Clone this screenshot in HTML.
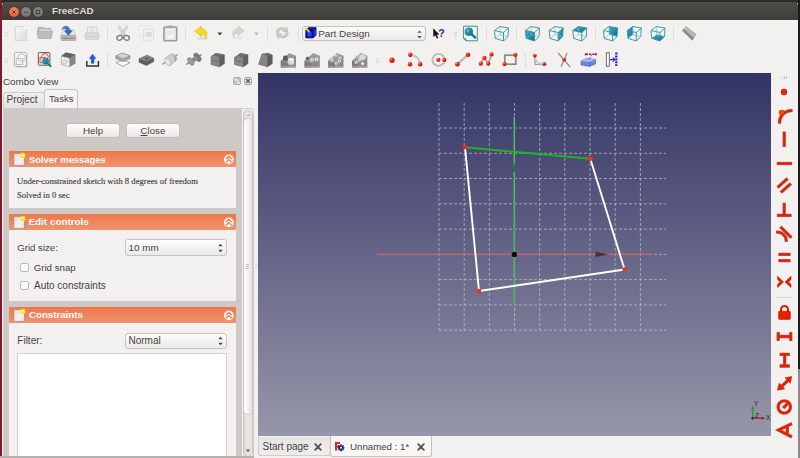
<!DOCTYPE html>
<html>
<head>
<meta charset="utf-8">
<title>FreeCAD</title>
<style>
html,body{margin:0;padding:0;}
body{width:800px;height:458px;overflow:hidden;position:relative;background:#f2f1f0;font-family:"Liberation Sans",sans-serif;color:#45433f;}
.abs{position:absolute;}
.t{position:absolute;white-space:nowrap;line-height:1;transform-origin:0 0;}
#desk-l{left:0;top:0;width:2px;height:458px;background:#7d1a30;}
#desk-t{left:0;top:0;width:800px;height:3px;background:#2c2b29;}
#desk-r{left:798px;top:0;width:2px;height:458px;background:#1a1a1a;}
#desk-r2{left:798px;top:369px;width:2px;height:89px;background:#8b8b8b;}
#titlebar{left:2px;top:2px;width:796px;height:18px;border-radius:4px 4px 0 0;background:linear-gradient(#504f49,#3c3b37);}
.wbtn{position:absolute;top:7px;width:9px;height:9px;border-radius:50%;}
#title{left:51.7px;top:7.2px;font-size:9px;font-weight:bold;color:#dfdbd2;transform:scaleX(1.08);}
.handle{position:absolute;width:3px;height:1px;background:#d9d6d2;box-shadow:0 2px 0 #d9d6d2,0 4px 0 #d9d6d2;}
.vsep{position:absolute;width:1px;height:15px;background:#e2dfdb;}
.combo{position:absolute;box-sizing:border-box;border:1px solid #c6c3be;border-radius:3px;background:linear-gradient(#fdfdfd,#ebe9e7);}
.btn{position:absolute;box-sizing:border-box;border:1px solid #c4c0ba;border-radius:3px;background:linear-gradient(#fefefe,#e9e7e5);}
.hdr{position:absolute;left:9px;width:227px;height:16px;background:linear-gradient(#ef7748,#f19370);}
.box{position:absolute;left:9px;width:227px;background:#f2f1f0;}
.chk{position:absolute;box-sizing:border-box;width:9.5px;height:9.5px;border:1px solid #bcb8b2;border-radius:2px;background:#fdfdfd;}
</style>
</head>
<body>
<!-- desktop edges -->
<div id="desk-t" class="abs"></div>
<div id="desk-l" class="abs"></div>
<div id="desk-r" class="abs"></div>
<div id="desk-r2" class="abs"></div>

<!-- title bar -->
<div id="titlebar" class="abs"></div>
<div class="wbtn" style="left:9px;width:10px;height:10px;top:6.5px;background:radial-gradient(circle at 50% 35%,#f58a5e,#e2541f);box-shadow:0 0 0 0.5px #5a2a18;"></div>
<div class="wbtn" style="left:21px;width:10px;height:10px;top:6.5px;background:radial-gradient(circle at 50% 35%,#8d8b84,#6b6963);box-shadow:0 0 0 0.5px #33322f;"></div>
<div class="wbtn" style="left:33px;width:10px;height:10px;top:6.5px;background:radial-gradient(circle at 50% 35%,#8d8b84,#6b6963);box-shadow:0 0 0 0.5px #33322f;"></div>
<svg class="abs" style="left:9px;top:6.5px;" width="34" height="10" viewBox="0 0 34 10">
  <path d="M3.3 3.3L6.7 6.7M6.7 3.3L3.3 6.7" stroke="#5a2010" stroke-width="1" opacity="0.85"/>
  <path d="M15 5.2H19" stroke="#3a3935" stroke-width="1"/>
  <rect x="27.3" y="3.3" width="3.4" height="3.4" fill="none" stroke="#3a3935" stroke-width="0.9"/>
</svg>
<span id="title" class="t">FreeCAD</span>

<!-- toolbars -->
<div class="handle" style="left:5px;top:31.5px;"></div>
<div class="handle" style="left:5px;top:58px;"></div>
<div class="handle" style="left:454px;top:31.5px;"></div>
<div class="handle" style="left:375.5px;top:58px;"></div>
<div class="vsep" style="left:107px;top:26px;"></div>
<div class="vsep" style="left:185px;top:26px;"></div>
<div class="vsep" style="left:266.5px;top:26px;"></div>
<div class="vsep" style="left:297.5px;top:26px;"></div>
<div class="vsep" style="left:485.5px;top:26px;"></div>
<div class="vsep" style="left:516px;top:26px;"></div>
<div class="vsep" style="left:595px;top:26px;"></div>
<div class="vsep" style="left:673px;top:26px;"></div>
<div class="vsep" style="left:107px;top:52.5px;"></div>
<div class="vsep" style="left:525px;top:52.5px;"></div>
<!-- workbench combo -->
<div class="combo" style="left:302px;top:25.5px;width:124px;height:15.5px;"></div>
<span class="t" style="left:318.2px;top:28.9px;font-size:9.9px;">Part Design</span>
<svg class="abs" style="left:417px;top:29px;" width="5" height="10" viewBox="0 0 5 10"><path d="M0.3 3.8 L2.5 1.4 L4.7 3.8Z M0.3 7 L2.5 9.4 L4.7 7Z" fill="#5a5852"/></svg>
<svg class="abs" style="left:0;top:20px;" width="800" height="53" viewBox="0 20 800 53">
<defs>
  <linearGradient id="gpage" x1="0" y1="0" x2="1" y2="1"><stop offset="0" stop-color="#f6f6f6"/><stop offset="1" stop-color="#dcdcdc"/></linearGradient>
  <linearGradient id="gteal" x1="0" y1="0" x2="1" y2="1"><stop offset="0" stop-color="#3fb0c6"/><stop offset="1" stop-color="#0b6f88"/></linearGradient>
  <radialGradient id="gball" cx="0.35" cy="0.3" r="0.8"><stop offset="0" stop-color="#ff9a80"/><stop offset="0.35" stop-color="#ff2a10"/><stop offset="1" stop-color="#a80000"/></radialGradient>
  <linearGradient id="gdark" x1="0" y1="0" x2="1" y2="1"><stop offset="0" stop-color="#8e8e8e"/><stop offset="1" stop-color="#5c5c5c"/></linearGradient>
</defs>
<!-- row 1 -->
<!-- new -->
<g>
  <path d="M15.3 26.5H24.3L26.7 28.9V40.5H15.3Z" fill="url(#gpage)" stroke="#cfcfcf" stroke-width="0.8"/>
  <circle cx="25.3" cy="27.8" r="1.6" fill="#fbfbfb"/>
</g>
<!-- open -->
<g>
  <path d="M38 27.3H43L44 28.3H51V37.8H38Z" fill="#b9b9b9" stroke="#a5a5a5" stroke-width="0.6"/>
  <path d="M39.5 29.5H50.5V37H39.5Z" fill="#e1e1e1"/>
  <path d="M37 31.2H52.8L51 38.4H38.2Z" fill="#bdbdbd" stroke="#a2a2a2" stroke-width="0.6"/>
</g>
<!-- save -->
<g>
  <path d="M63 30H73.8L75.9 35.6H61Z" fill="#e9e9e9" stroke="#b9b9b9" stroke-width="0.6"/>
  <rect x="61" y="35.3" width="14.9" height="5.2" rx="1" fill="#b9b9b9" stroke="#9a9a9a" stroke-width="0.6"/>
  <rect x="62.8" y="37.6" width="11.4" height="1.4" fill="#8f8f8f"/>
  <path d="M61.8 29.6C62.2 27 64.5 25.8 66.8 26.2C69 26.6 70.2 28.4 70.4 30.7H72.4L68.4 35.3L64.3 30.7H66.6C66.4 29.4 65.6 28.6 64.5 28.5C63.4 28.4 62.5 28.9 61.8 29.6Z" fill="#2f6fc0" stroke="#1f4f98" stroke-width="0.4" stroke-linejoin="round"/>
  <path d="M62.4 28.6C63.2 27.2 65 26.5 66.8 26.8C68.4 27.2 69.4 28.4 69.8 30" fill="none" stroke="#7fb0e6" stroke-width="0.8"/>
</g>
<!-- print -->
<g>
  <rect x="87.3" y="27" width="9.5" height="6.5" fill="#ececec" stroke="#cbcbcb" stroke-width="0.7"/>
  <path d="M92 28.3V31.6M90.6 30.2L92 31.7L93.4 30.2" stroke="#cfcfcf" stroke-width="0.8" fill="none"/>
  <rect x="85" y="32.7" width="14" height="6.6" rx="1.2" fill="#dedede" stroke="#c3c3c3" stroke-width="0.7"/>
  <rect x="85.6" y="36" width="12.8" height="1" fill="#c9c9c9"/>
</g>
<!-- cut -->
<g fill="none">
  <path d="M118.7 26.2L125 36" stroke="#b4b4b4" stroke-width="2.4"/>
  <path d="M118.7 26.2L125 36" stroke="#ececec" stroke-width="1.2"/>
  <path d="M127.3 26.2L121 36" stroke="#b4b4b4" stroke-width="2.4"/>
  <path d="M127.3 26.2L121 36" stroke="#ececec" stroke-width="1.2"/>
  <ellipse cx="119.6" cy="37.8" rx="2.8" ry="2.3" transform="rotate(-25 119.6 37.8)" stroke="#858585" stroke-width="1.5"/>
  <ellipse cx="126.6" cy="37.8" rx="2.8" ry="2.3" transform="rotate(25 126.6 37.8)" stroke="#858585" stroke-width="1.5"/>
</g>
<!-- copy -->
<g>
  <path d="M139.2 26H149V36.5H139.2Z" fill="#f4f4f4" stroke="#dedede" stroke-width="0.7"/>
  <path d="M143.3 29.3H153.5V38.3L151 40.8H143.3Z" fill="#f1f1f1" stroke="#d4d4d4" stroke-width="0.7"/>
  <rect x="145.5" y="32" width="6" height="4.8" fill="#dadada"/>
</g>
<!-- paste -->
<g>
  <rect x="163.9" y="26.9" width="12.8" height="13.8" rx="0.8" fill="#e4e4e4" stroke="#9a9a9a" stroke-width="1.5"/>
  <rect x="167.3" y="25.4" width="6" height="2.4" rx="0.6" fill="#a8a8a8"/>
  <path d="M165.8 29H174.8V36.8L172.6 39H165.8Z" fill="#f4f4f4" stroke="#d0d0d0" stroke-width="0.4"/>
  <path d="M167 31.2H173.5M167 33H173.5M167 34.8H172" stroke="#d4d4d4" stroke-width="0.7"/>
</g>
<!-- undo -->
<g>
  <ellipse cx="202.5" cy="38.5" rx="5.5" ry="1.3" fill="#dcdad6"/>
  <path d="M194.8 31.2L201.5 26.2V29C207 29 208.6 34.2 205 38.8C205.6 35.4 204.5 33.9 201.5 34V36.6Z" fill="#f5dc1e" stroke="#d9b800" stroke-width="0.6" stroke-linejoin="round"/>
</g>
<path d="M217.3 32.5H222.3L219.8 35.6Z" fill="#45443f"/>
<!-- redo -->
<g>
  <ellipse cx="237.5" cy="38" rx="5.3" ry="1.2" fill="#e6e4e1"/>
  <path d="M244.2 30.8L238.1 26.2V28.9C233 28.9 231.4 33.4 234.2 37.7C233.6 34.4 235 33.1 238.1 33.2V35.8Z" fill="#d4d4d4" stroke="#c4c4c4" stroke-width="0.6" stroke-linejoin="round"/>
</g>
<path d="M254 32.5H258.8L256.4 35.5Z" fill="#b9b7b3"/>
<!-- refresh -->
<g fill="#c9c9c9" stroke="#b5b5b5" stroke-width="0.5" stroke-linejoin="round">
  <path d="M276.2 32.5C276.2 28 281.5 26 285 28.6L286.6 26.8L287.8 32.2L282.4 31.6L283.8 30C281.8 28.8 279 29.8 278.8 32.5Z"/>
  <path d="M288.3 33C288.3 37.5 283 39.5 279.5 36.9L277.9 38.7L276.7 33.3L282.1 33.9L280.7 35.5C282.7 36.7 285.5 35.7 285.7 33Z"/>
</g>
<!-- workbench icon -->
<g stroke-linejoin="round">
  <path d="M305.9 30.2L308.6 27.7H316V35.3L313 37.8H305.9Z" fill="#0a16d8" stroke="#04041c" stroke-width="0.9"/>
  <path d="M313 30.2L316 27.7V35.3L313 37.8Z" fill="#1434f2"/>
  <path d="M305.9 30.2H313V37.8M313 30.2L316 27.7" stroke="#04041c" stroke-width="0.8" fill="none"/>
  <rect x="307.6" y="32" width="3.8" height="4" fill="#2a4af4"/>
  <path d="M305.9 28.1L309.3 32.2" stroke="#f2cc18" stroke-width="2"/>
</g>
<!-- whats this -->
<g>
  <path d="M433.3 28.2V37L435.3 35.2L436.8 38.6L438.3 37.9L436.8 34.7L439.3 34.5Z" fill="#111" />
  <text x="438.3" y="36.9" font-family="Liberation Sans, sans-serif" font-weight="bold" font-size="10.5" fill="#1f1fa8">?</text>
</g>
<!-- zoom fit -->
<g>
  <path d="M463.6 26.2H477.3V40.8H466L463.6 38.6Z" fill="#f5f8f8" stroke="#3a8a9c" stroke-width="1"/>
  <path d="M463.6 38.6H466V40.8" fill="none" stroke="#3a8a9c" stroke-width="0.8"/>
  <path d="M472 34.6L475.2 37.7" stroke="#0f7890" stroke-width="2.3" stroke-linecap="round"/>
  <circle cx="468.9" cy="31.7" r="3.9" fill="url(#gteal)" stroke="#0b6a80" stroke-width="0.6"/>
  <circle cx="467.8" cy="30.5" r="1.3" fill="#7fd0df" opacity="0.7"/>
</g>

<!-- view cubes -->
<defs>
  <g id="cubew" fill="none" stroke="#2f8ea3" stroke-width="0.9" stroke-linejoin="round">
    <path d="M6 1L6.2 9M6.2 9L1.2 12.8M6.2 9L14 11" stroke="#7fbfcc" stroke-width="0.7"/>
    <path d="M0.5 5L9.5 7V15.5L1.2 12.8Z"/>
    <path d="M0.5 5L6 1L14.5 2.5L9.5 7"/>
    <path d="M14.5 2.5L14 11L9.5 15.5"/>
  </g>
</defs>
<g transform="translate(494 25.5)"><path d="M0.5 5L6 1L14.5 2.5L14 11L9.5 15.5L1.2 12.8Z" fill="#f1f4f4"/><use href="#cubew"/></g>
<g transform="translate(525 25.5)"><path d="M0.5 5L6 1L14.5 2.5L14 11L9.5 15.5L1.2 12.8Z" fill="#f1f4f4"/><path d="M0.5 5L9.5 7V15.5L1.2 12.8Z" fill="url(#gteal)"/><use href="#cubew"/></g>
<g transform="translate(548.7 25.5)"><path d="M0.5 5L6 1L14.5 2.5L14 11L9.5 15.5L1.2 12.8Z" fill="#f1f4f4"/><path d="M9.5 7L14.5 2.5L14 11L9.5 15.5Z" fill="url(#gteal)"/><use href="#cubew"/></g>
<g transform="translate(572.3 25.5)"><path d="M0.5 5L6 1L14.5 2.5L14 11L9.5 15.5L1.2 12.8Z" fill="#f1f4f4"/><path d="M0.5 5L6 1L14.5 2.5L9.5 7Z" fill="url(#gteal)"/><use href="#cubew"/></g>
<g transform="translate(603 25.5)"><path d="M0.5 5L6 1L14.5 2.5L14 11L9.5 15.5L1.2 12.8Z" fill="#f1f4f4"/><path d="M6 1L14.5 2.5L14 11L6.2 9Z" fill="url(#gteal)"/><use href="#cubew"/></g>
<g transform="translate(626.8 25.5)"><path d="M0.5 5L6 1L14.5 2.5L14 11L9.5 15.5L1.2 12.8Z" fill="#f1f4f4"/><path d="M0.5 5L6 1L6.2 9L1.2 12.8Z" fill="url(#gteal)"/><use href="#cubew"/></g>
<g transform="translate(650.5 25.5)"><path d="M0.5 5L6 1L14.5 2.5L14 11L9.5 15.5L1.2 12.8Z" fill="#f1f4f4"/><path d="M1.2 12.8L6.2 9L14 11L9.5 15.5Z" fill="url(#gteal)"/><use href="#cubew"/></g>
<!-- measure -->
<g>
  <path d="M682.3 30.5L686.2 26.6L696 34.2L692.3 40.2Z" fill="#a9a9a9" stroke="#8c8c8c" stroke-width="0.5"/>
  <path d="M682.3 30.5L692.3 40.2L693.6 37.6L684 28.8Z" fill="#8a8a8a"/>
  <path d="M686.2 26.6L696 34.2L693.6 37.6L684 28.8Z" fill="#b8b8b8"/>
</g>

<!-- row 2 -->
<!-- new sketch -->
<g>
  <rect x="15.5" y="53.5" width="12" height="14" rx="1.2" fill="#c6c6c6"/>
  <rect x="14.4" y="52.4" width="12" height="14" rx="1.2" fill="#f4f4f4" stroke="#a2a2a2" stroke-width="0.8"/>
  <circle cx="21.6" cy="57.6" r="3.7" fill="none" stroke="#b2b2b2" stroke-width="0.8"/>
  <rect x="16.2" y="58.6" width="6.6" height="5.8" fill="none" stroke="#b2b2b2" stroke-width="0.8"/>
</g>
<!-- edit sketch -->
<g>
  <rect x="38.3" y="52.6" width="11.6" height="12.6" rx="0.8" fill="#f6f6f6" stroke="#4a4a4a" stroke-width="0.9"/>
  <circle cx="45" cy="56.8" r="3.3" fill="#fbe3df" stroke="#e34a3a" stroke-width="1"/>
  <rect x="40" y="57.6" width="5.2" height="5.2" fill="#f9d4cf" stroke="#e34a3a" stroke-width="1"/>
  <path d="M47.6 63.4L50.8 66.4" stroke="#0f7890" stroke-width="1.7" stroke-linecap="round"/>
  <circle cx="45.6" cy="61.2" r="3.1" fill="url(#gteal)" stroke="#0b6a80" stroke-width="0.5"/>
</g>
<!-- part box -->
<g>
  <path d="M61.4 56L66 52.5L75.5 54.5V63.5L70 66.8L61.4 64.5Z" fill="#858585"/>
  <path d="M61.4 56L69.6 58V66.8L61.4 64.5Z" fill="#f0f0f0" stroke="#9a9a9a" stroke-width="0.5"/>
  <path d="M61.4 56L66 52.5L75.5 54.5L69.6 58Z" fill="#646464"/>
  <circle cx="66.3" cy="59.6" r="2.2" fill="none" stroke="#b8b8b8" stroke-width="0.6"/>
  <rect x="63" y="60.8" width="3.4" height="3" fill="none" stroke="#b8b8b8" stroke-width="0.6"/>
</g>
<!-- export -->
<g>
  <path d="M86.8 61V66H98.4V61" fill="none" stroke="#303030" stroke-width="1.5"/>
  <path d="M92.6 54.2L95.8 58.6H93.9V63.2H91.3V58.6H89.4Z" fill="#1d62d6" stroke="#0d3f9c" stroke-width="0.5"/>
</g>
<!-- pad -->
<g>
  <path d="M115.8 62.6L123 60L130 62.6L123 66.4Z" fill="#fafafa" stroke="#6e6e6e" stroke-width="0.6"/>
  <path d="M115.8 55.8L123 53L130 55.8V58.6L123 61.6L115.8 58.6Z" fill="#a6a6a6" stroke="#707070" stroke-width="0.5"/>
  <path d="M115.8 55.8L123 53L130 55.8L123 58.6Z" fill="#d2d2d2" stroke="#808080" stroke-width="0.4"/>
</g>
<!-- pocket -->
<g>
  <path d="M139 58.8L147 55.2L153.8 58.3V61.6L146.3 65.6L139 62.3Z" fill="#5c5c5c" stroke="#4c4c4c" stroke-width="0.4"/>
  <path d="M139 58.8L147 55.2L153.8 58.3L146.3 61.8Z" fill="#848484"/>
  <path d="M144.2 58.6L147 57.3L149.4 58.5L146.6 59.8Z" fill="#5a5a5a"/>
</g>
<!-- revolve -->
<g>
  <path d="M162 64.4L165.5 62.2M175 56.3L178 54.4" stroke="#8a8a8a" stroke-width="1.1"/>
  <path d="M165.4 58L171.2 53.9C174.6 53.6 177 56.3 176.7 59.8L170.4 65.6C167.5 66 164.8 62 165.4 58Z" fill="#cdcdcd" stroke="#9a9a9a" stroke-width="0.5"/>
  <path d="M173.2 54.2C175.6 54.8 177 57 176.7 59.8L174 62.3C174.6 59 174.4 56.2 173.2 54.2Z" fill="#a9a9a9"/>
  <ellipse cx="167.8" cy="61.8" rx="2.5" ry="4" transform="rotate(-32 167.8 61.8)" fill="#e6e6e6" stroke="#9a9a9a" stroke-width="0.5"/>
</g>
<!-- groove -->
<g>
  <path d="M186.3 64.5L201.5 54.5" stroke="#777" stroke-width="1.1"/>
  <ellipse cx="190.8" cy="61.5" rx="2.3" ry="4.3" transform="rotate(-35 190.8 61.5)" fill="#9c9c9c" stroke="#666" stroke-width="0.5"/>
  <ellipse cx="197.5" cy="57.3" rx="2.6" ry="4.8" transform="rotate(-35 197.5 57.3)" fill="#7b7b7b" stroke="#5a5a5a" stroke-width="0.5"/>
  <path d="M191.5 58.5L196 55.5L198 59.5L193.5 62.5Z" fill="#8a8a8a"/>
</g>
<!-- fillet -->
<g>
  <path d="M211 56.5L216 53.2L224.3 54.8V63.5L219.5 66.8L211 64.5Z" fill="#6b6b6b" stroke="#505050" stroke-width="0.5"/>
  <path d="M211 56.5C213 55 217 54.5 219.5 58.5V66.8L211 64.5Z" fill="#878787"/>
  <path d="M211.5 60.3L219.3 61.8" stroke="#5a5a5a" stroke-width="0.6"/>
  <path d="M219.5 58.5L224.3 54.8V63.5L219.5 66.8Z" fill="#5f5f5f"/>
</g>
<!-- chamfer -->
<g>
  <path d="M234.6 57.5L240.5 53.2L248 54.8V63.5L243.3 66.8L234.6 64.5Z" fill="#6b6b6b" stroke="#505050" stroke-width="0.5"/>
  <path d="M234.6 59.5L237.5 56L243.3 58V66.8L234.6 64.5Z" fill="#878787"/>
  <path d="M235 60.5L243 62" stroke="#5a5a5a" stroke-width="0.6"/>
  <path d="M243.3 58L248 54.8V63.5L243.3 66.8Z" fill="#5f5f5f"/>
</g>
<!-- draft -->
<g>
  <path d="M262 54L268 53.2L272.2 55V63.5L267.5 66.8L258.7 64.3Z" fill="#676767" stroke="#505050" stroke-width="0.5"/>
  <path d="M262 54L267.5 55.5V66.8L258.7 64.3Z" fill="#858585"/>
  <path d="M267.5 55.5L272.2 55V63.5L267.5 66.8Z" fill="#5c5c5c"/>
</g>

<!-- pattern icons -->
<defs>
  <g id="house">
    <path d="M0.3 14.6V8L9 0.5L15.5 3.3V14.6Z" fill="#8b8b8b"/>
    <path d="M0.3 8L9 0.5L15.5 3.3L7 10.5Z" fill="#9a9a9a"/>
    <path d="M0.3 8L7 10.5V14.6H0.3Z" fill="#7c7c7c"/>
    <path d="M0.3 13.2H15.5V14.6H0.3Z" fill="#9e9e9e"/>
  </g>
</defs>
<g transform="translate(280.5 52.8)">
  <use href="#house"/>
  <rect x="2.6" y="2.6" width="4.6" height="5.6" rx="1.6" fill="#5b5b5b"/>
  <rect x="7.6" y="5.4" width="6" height="6.6" rx="2" fill="#dcdcdc"/>
  <ellipse cx="10.6" cy="6.6" rx="3" ry="1.3" fill="#f2f2f2"/>
</g>
<g transform="translate(304.3 52.8)">
  <use href="#house"/>
  <circle cx="3.2" cy="5.6" r="1.7" fill="#5e5e5e"/>
  <circle cx="7.7" cy="7" r="1.9" fill="#e6e6e6"/>
  <circle cx="12.4" cy="6.6" r="1.9" fill="#e6e6e6"/>
  <circle cx="7.9" cy="7.3" r="0.8" fill="#8f8f8f"/>
  <circle cx="12.6" cy="6.9" r="0.8" fill="#8f8f8f"/>
</g>
<g transform="translate(328 52.8)">
  <use href="#house"/>
  <g fill="#e2e2e2">
    <circle cx="8.3" cy="2.8" r="1.6"/><circle cx="12" cy="5.2" r="1.6"/><circle cx="4" cy="4.8" r="1.6"/>
    <circle cx="11.4" cy="8.4" r="1.6"/><circle cx="8.3" cy="10.8" r="1.6"/><circle cx="4" cy="7.8" r="1.6"/>
  </g>
  <g fill="#8c8c8c">
    <circle cx="8.5" cy="3.1" r="0.7"/><circle cx="12.2" cy="5.5" r="0.7"/><circle cx="4.2" cy="5.1" r="0.7"/>
    <circle cx="11.6" cy="8.7" r="0.7"/><circle cx="8.5" cy="11.1" r="0.7"/><circle cx="4.2" cy="8.1" r="0.7"/>
  </g>
</g>
<g transform="translate(351.8 52.8)">
  <use href="#house"/>
  <path d="M7 2.6L10.3 0.8L14.2 2.6V6L10.8 7.8L7 6Z" fill="#d9d9d9" stroke="#a5a5a5" stroke-width="0.4"/>
  <g fill="#e4e4e4">
    <circle cx="4.4" cy="3.8" r="1.5"/><circle cx="7.6" cy="7.2" r="1.5"/><circle cx="10.8" cy="10.8" r="1.7"/><circle cx="4.4" cy="9.6" r="1.5"/>
  </g>
  <g fill="#8c8c8c"><circle cx="4.6" cy="4.1" r="0.6"/><circle cx="7.8" cy="7.5" r="0.6"/><circle cx="4.6" cy="9.9" r="0.6"/></g>
</g>
<!-- sketcher geometry -->
<circle cx="392" cy="60.2" r="2.6" fill="url(#gball)"/>
<g>
  <path d="M410.8 54.8A10 10 0 0 1 420.2 63.8" fill="none" stroke="#b4b4b4" stroke-width="1.8"/>
  <path d="M410.8 54.8A10 10 0 0 1 420.2 63.8" fill="none" stroke="#e4e4e4" stroke-width="0.6"/>
  <circle cx="410.3" cy="54.8" r="2.2" fill="url(#gball)"/>
  <circle cx="410" cy="64.2" r="2.2" fill="url(#gball)"/>
  <circle cx="420.2" cy="64.3" r="2.2" fill="url(#gball)"/>
</g>
<g>
  <circle cx="438.5" cy="59.9" r="6" fill="none" stroke="#a9a9a9" stroke-width="1.9"/>
  <circle cx="438.5" cy="59.9" r="6" fill="none" stroke="#e2e2e2" stroke-width="0.6"/>
  <circle cx="438.3" cy="59.8" r="2.1" fill="url(#gball)"/>
  <circle cx="444.4" cy="59.9" r="2.1" fill="url(#gball)"/>
</g>
<g>
  <path d="M457.4 64.3L468 54.7" stroke="#a5a5a5" stroke-width="2.2"/>
  <path d="M457.4 64.3L468 54.7" stroke="#dedede" stroke-width="0.7"/>
  <circle cx="457.4" cy="64.2" r="2.3" fill="url(#gball)"/>
  <circle cx="468" cy="54.7" r="2.3" fill="url(#gball)"/>
</g>
<g>
  <path d="M480.8 63.7L484.4 57.8L488.3 63.7L491.5 54.4" fill="none" stroke="#a5a5a5" stroke-width="1.8"/>
  <circle cx="480.8" cy="63.7" r="2.1" fill="url(#gball)"/>
  <circle cx="484.4" cy="57.8" r="2.1" fill="url(#gball)"/>
  <circle cx="488.3" cy="63.7" r="2.1" fill="url(#gball)"/>
  <circle cx="491.5" cy="54.4" r="2.1" fill="url(#gball)"/>
</g>
<g>
  <rect x="504.8" y="55.2" width="11" height="9" fill="none" stroke="#8a8a8a" stroke-width="1.7"/>
  <circle cx="515.3" cy="54.8" r="2.1" fill="url(#gball)"/>
  <circle cx="504.5" cy="64.1" r="2.1" fill="url(#gball)"/>
</g>
<!-- fillet -->
<g>
  <path d="M535 55.5V64.5H547" fill="none" stroke="#9c9c9c" stroke-width="1.2"/>
  <path d="M535.3 57.5C535.8 61.5 538 63.8 542 64.2" fill="none" stroke="#c4c4c4" stroke-width="1.6"/>
  <circle cx="534.8" cy="55.6" r="1.9" fill="url(#gball)"/>
  <circle cx="544.2" cy="64" r="1.9" fill="url(#gball)"/>
</g>
<!-- trim -->
<g>
  <path d="M558.2 53L570 66.8M567.2 53L561 66.8" stroke="#8f8f8f" stroke-width="1.3"/>
  <circle cx="564.1" cy="59.6" r="1.9" fill="url(#gball)"/>
</g>
<!-- external geometry -->
<g>
  <path d="M581 61L586.5 58.3L595.5 59.5V64L589.5 66.4L581 65Z" fill="#6f86de" stroke="#3a4fb0" stroke-width="0.5"/>
  <path d="M581 61L586.5 58.3L595.5 59.5L589.5 62Z" fill="#aab8f2"/>
  <path d="M589.5 62V66.4" stroke="#3a4fb0" stroke-width="0.5"/>
  <path d="M589 59.5L591.5 55" stroke="#23238a" stroke-width="0.8" stroke-dasharray="1.2 0.8"/>
  <path d="M586 54.2H596" stroke="#2222c8" stroke-width="1.4" stroke-dasharray="2 1.2"/>
  <circle cx="586" cy="54.2" r="1.2" fill="#e02010"/>
  <circle cx="595.8" cy="54.2" r="1.2" fill="#e02010"/>
</g>
<!-- construction mode -->
<g>
  <rect x="606.3" y="52.8" width="3" height="13.4" fill="#fafafa" stroke="#4a4a4a" stroke-width="0.8"/>
  <path d="M616.3 52.6V66.6" stroke="#1616d8" stroke-width="2.2" stroke-dasharray="1.9 1"/>
  <path d="M610 59.6H615M612.8 57.6L615 59.6L612.8 61.6" stroke="#2a2ad0" stroke-width="1.1" fill="none"/>
</g>

</svg>


<!-- Combo view dock -->
<span class="t" style="left:3px;top:77px;font-size:9.8px;">Combo View</span>
<svg class="abs" style="left:233px;top:77px;" width="20" height="8" viewBox="0 0 20 8">
  <rect x="0.5" y="0.5" width="7" height="7" rx="1.5" fill="#e4e2df" stroke="#aeaba6" stroke-width="1"/>
  <path d="M2 6L4 4M3 1.8H6.2V5" stroke="#b5b2ad" stroke-width="1.1" fill="none"/>
  <path d="M1.8 3.4V6.2H4.6" stroke="#bcb9b4" stroke-width="0.9" fill="none"/>
  <rect x="11.5" y="0.5" width="7" height="7" rx="1.5" fill="#e4e2df" stroke="#aeaba6" stroke-width="1"/>
  <path d="M13 2L17 6M17 2L13 6" stroke="#5a5853" stroke-width="1.1" fill="none"/>
</svg>
<!-- tab widget frame -->
<div class="abs" style="left:3px;top:107.5px;width:251px;height:353px;box-sizing:border-box;border:1px solid #d0cdc8;border-radius:0 3px 0 0;background:#f2f1f0;"></div>
<!-- tabs -->
<div class="abs" style="left:3px;top:92px;width:42px;height:17px;box-sizing:border-box;border:1px solid #cfccc7;border-bottom:none;border-radius:3px 3px 0 0;background:linear-gradient(#f0efed,#e4e2df);"></div>
<div class="abs" style="left:44px;top:89px;width:34px;height:20px;box-sizing:border-box;border:1px solid #c9c5c0;border-bottom:none;border-radius:3px 3px 0 0;background:#f5f4f3;"></div>
<span class="t" style="left:6.5px;top:95px;font-size:10px;">Project</span>
<span class="t" style="left:49px;top:94px;font-size:9.6px;">Tasks</span>
<!-- task panel gray background -->
<div class="abs" style="left:4px;top:108.4px;width:238px;height:350px;background:#cdc9c6;"></div>
<!-- scrollbar -->
<div class="abs" style="left:243px;top:110px;width:10px;height:347px;border-radius:5px;background:linear-gradient(90deg,#d9d6d2,#e9e7e4 40%,#e4e2df);box-shadow:inset 0 0 0 1px #cbc8c3;"></div>
<div class="abs" style="left:244px;top:119px;width:8px;height:295px;border-radius:4px;background:linear-gradient(90deg,#fdfdfd,#f4f3f2 50%,#e4e2df);box-shadow:0 0 0 1px #c9c6c1;"></div>
<svg class="abs" style="left:245.5px;top:113px;" width="5" height="3" viewBox="0 0 6 4"><path d="M0.5 3.5 L3 0.8 L5.5 3.5Z" fill="#b5b2ad"/></svg>
<svg class="abs" style="left:245px;top:449px;" width="6" height="4" viewBox="0 0 6 4"><path d="M0.5 0.5 L3 3.2 L5.5 0.5Z" fill="#6a6862"/></svg>
<div class="handle" style="left:246px;top:264px;background:#bfbbb5;box-shadow:0 2px 0 #bfbbb5,0 4px 0 #bfbbb5;"></div>
<!-- dock splitter handle -->
<div class="handle" style="left:255px;top:264px;width:2px;"></div>

<!-- Help / Close buttons -->
<div class="btn" style="left:66px;top:123px;width:54px;height:15px;"></div>
<div class="btn" style="left:126px;top:123px;width:54px;height:15px;"></div>
<span class="t" style="left:83px;top:126px;font-size:9.8px;">Help</span>
<span class="t" style="left:140.5px;top:126px;font-size:9.7px;"><u>C</u>lose</span>

<!-- Solver messages -->
<div class="hdr" style="top:151px;"></div>
<div class="box" style="top:167px;height:41px;"></div>
<span class="t" style="left:28.5px;top:154.5px;font-size:9.9px;font-weight:bold;color:#fff;transform:scaleX(0.95);">Solver messages</span>
<span class="t" style="left:17px;top:177.3px;font-size:8.65px;font-family:'Liberation Serif',serif;color:#45433f;-webkit-text-stroke:0.15px #45433f;">Under-constrained sketch with 8 degrees of freedom</span>
<span class="t" style="left:17px;top:191.2px;font-size:8.65px;font-family:'Liberation Serif',serif;color:#45433f;-webkit-text-stroke:0.15px #45433f;">Solved in 0 sec</span>

<svg class="abs" width="0" height="0" style="left:0;top:0;"><defs><linearGradient id="gdoc" x1="0" y1="0" x2="1" y2="1"><stop offset="0" stop-color="#dcdcdc"/><stop offset="0.6" stop-color="#f2f2f2"/><stop offset="1" stop-color="#e4e4e4"/></linearGradient></defs></svg>
<svg class="abs" style="left:9px;top:151px;" width="227" height="16" viewBox="0 0 227 16">
  <path d="M4.8 2.6H13.2L15.4 4.8V14.4H4.8Z" fill="url(#gdoc)" stroke="#8d7468" stroke-width="0.5"/>
  <circle cx="13.8" cy="4.4" r="2.7" fill="#f7e628"/>
  <circle cx="13.8" cy="4.2" r="1.2" fill="#fdf58a"/>
  <circle cx="219.8" cy="8.4" r="4.9" fill="#faf6f3"/>
  <path d="M217 8L219.8 5.4L222.6 8M217 11.2L219.8 8.6L222.6 11.2" fill="none" stroke="#ee7a4c" stroke-width="1.3"/>
</svg>
<!-- Edit controls -->
<div class="hdr" style="top:213.5px;"></div>
<div class="box" style="top:229.5px;height:71.5px;"></div>
<span class="t" style="left:28.5px;top:216.9px;font-size:9.9px;font-weight:bold;color:#fff;">Edit controls</span>
<span class="t" style="left:17.3px;top:242.7px;font-size:9.6px;">Grid size:</span>
<div class="combo" style="left:125px;top:239px;width:102px;height:16.5px;"></div>
<span class="t" style="left:128.5px;top:242.5px;font-size:9.9px;">10 mm</span>
<svg class="abs" style="left:218px;top:243px;" width="5" height="10" viewBox="0 0 5 10"><path d="M0.3 3.3 L2.5 0.8 L4.7 3.3Z M0.3 6.7 L2.5 9.2 L4.7 6.7Z" fill="#4a4944"/></svg>
<div class="chk" style="left:19.5px;top:262.6px;"></div>
<span class="t" style="left:33.7px;top:262.5px;font-size:9.7px;">Grid snap</span>
<div class="chk" style="left:19.5px;top:280.8px;"></div>
<span class="t" style="left:34px;top:280.6px;font-size:10px;">Auto constraints</span>

<svg class="abs" style="left:9px;top:213.5px;" width="227" height="16" viewBox="0 0 227 16">
  <path d="M4.8 2.6H13.2L15.4 4.8V14.4H4.8Z" fill="url(#gdoc)" stroke="#8d7468" stroke-width="0.5"/>
  <circle cx="13.8" cy="4.4" r="2.7" fill="#f7e628"/>
  <circle cx="13.8" cy="4.2" r="1.2" fill="#fdf58a"/>
  <circle cx="219.8" cy="8.4" r="4.9" fill="#faf6f3"/>
  <path d="M217 8L219.8 5.4L222.6 8M217 11.2L219.8 8.6L222.6 11.2" fill="none" stroke="#ee7a4c" stroke-width="1.3"/>
</svg>
<!-- Constraints -->
<div class="hdr" style="top:306.5px;"></div>
<div class="box" style="top:322.5px;height:136px;"></div>
<span class="t" style="left:28.5px;top:310px;font-size:9.9px;font-weight:bold;color:#fff;transform:scaleX(0.98);">Constraints</span>
<span class="t" style="left:17.3px;top:335.8px;font-size:10px;">Filter:</span>
<div class="combo" style="left:125px;top:332.5px;width:102px;height:16.5px;"></div>
<span class="t" style="left:128.5px;top:335.7px;font-size:10px;">Normal</span>
<svg class="abs" style="left:218px;top:336px;" width="5" height="10" viewBox="0 0 5 10"><path d="M0.3 3.3 L2.5 0.8 L4.7 3.3Z M0.3 6.7 L2.5 9.2 L4.7 6.7Z" fill="#4a4944"/></svg>
<div class="abs" style="left:17px;top:353.2px;width:210px;height:110px;box-sizing:border-box;border:1px solid #d3d0cb;background:#fff;"></div>
<svg class="abs" style="left:9px;top:306.5px;" width="227" height="16" viewBox="0 0 227 16">
  <path d="M4.8 2.6H13.2L15.4 4.8V14.4H4.8Z" fill="url(#gdoc)" stroke="#8d7468" stroke-width="0.5"/>
  <circle cx="13.8" cy="4.4" r="2.7" fill="#f7e628"/>
  <circle cx="13.8" cy="4.2" r="1.2" fill="#fdf58a"/>
  <circle cx="219.8" cy="8.4" r="4.9" fill="#faf6f3"/>
  <path d="M217 8L219.8 5.4L222.6 8M217 11.2L219.8 8.6L222.6 11.2" fill="none" stroke="#ee7a4c" stroke-width="1.3"/>
</svg>
<!-- bottom edge -->
<div class="abs" style="left:0;top:456px;width:254px;height:2px;background:#b5b1ac;"></div>


<!-- 3D view -->
<svg class="abs" style="left:258px;top:73px;" width="513" height="363" viewBox="258 73 513 363">
  <defs>
    <linearGradient id="bg3d" x1="0" y1="0" x2="0" y2="1">
      <stop offset="0" stop-color="#333365"/>
      <stop offset="1" stop-color="#9797aa"/>
    </linearGradient>
  </defs>
  <rect x="258" y="73" width="513" height="363" fill="url(#bg3d)"/>
  <!-- grid -->
  <g stroke="#c6c6ce" stroke-width="0.85" stroke-dasharray="3 2" fill="none" opacity="0.8">
    <path d="M439 103V330.5 M464.2 103V330.5 M489.3 103V330.5 M514.5 103V330.5 M539.7 103V330.5 M564.8 103V330.5 M590 103V330.5 M615.2 103V330.5 M640.4 103V330.5"/>
    <path d="M439 128H666 M439 153.3H666 M439 178.5H666 M439 203.8H666 M439 229.1H666 M439 254.4H666 M439 279.6H666 M439 304.9H666 M439 330.2H666"/>
  </g>
  <!-- axes -->
  <line x1="377" y1="254.4" x2="652" y2="254.4" stroke="#d5605f" stroke-width="1.1"/>
  <line x1="514.3" y1="117" x2="514.3" y2="305.5" stroke="#56b464" stroke-width="1.6"/>
  <!-- axis arrows -->
  <path d="M595.5 251.8 L608 254.4 L595.5 257Z" fill="#5a2830"/>
  <path d="M512.3 171.5 L514.3 162.5 L516.3 171.5Z" fill="#2f6a38"/>
  <!-- sketch -->
  <path d="M465 147.3 L479 291 L624.6 269.5 L590.3 158.8" stroke="#ffffff" stroke-width="1.9" fill="none" stroke-linejoin="round"/>
  <line x1="465" y1="147.3" x2="590.3" y2="158.8" stroke="#1fb41f" stroke-width="1.9"/>
  <circle cx="514.3" cy="254.4" r="2.6" fill="#0a0a0a"/>
  <g fill="#ff2a0a">
    <circle cx="465" cy="147.3" r="2.3"/>
    <circle cx="590.3" cy="158.8" r="2.3"/>
    <circle cx="624.6" cy="269.5" r="2.3"/>
    <circle cx="479" cy="291" r="2.3"/>
  </g>
  <!-- axis cross -->
  <g stroke-width="1.2" fill="none">
    <line x1="752.7" y1="418.2" x2="752.7" y2="407" stroke="#1fa01f"/>
    <line x1="752.7" y1="418.2" x2="764" y2="418.2" stroke="#c01818"/>
  </g>
  <path d="M751 409.5 L752.7 405.5 L754.4 409.5Z" fill="#1fa01f"/>
  <path d="M761.5 416.6 L765.3 418.2 L761.5 419.8Z" fill="#c01818"/>
  <circle cx="752.7" cy="418.2" r="1.3" fill="#1a1a9a"/>
  <g font-family="Liberation Sans, sans-serif" font-size="6.5" fill="#1c1c24">
    <text x="754" y="405.5">Y</text>
    <text x="755" y="418">Z</text>
    <text x="766" y="420">X</text>
  </g>
</svg>


<!-- right constraint toolbar -->
<div class="handle" style="left:782px;top:76px;width:1px;height:3px;box-shadow:2px 0 0 #c4c1bc,4px 0 0 #c4c1bc;"></div>
<svg class="abs" style="left:772px;top:80px;" width="26" height="378" viewBox="772 80 26 378">
  <g stroke="#8a0d00" stroke-width="3.3" fill="none" stroke-linecap="square" stroke-linejoin="miter" opacity="0.6">
    <path d="M791 110.6 A11.5 11.5 0 0 0 779.6 122"/>
    <path d="M784.2 133.2V145.3"/>
    <path d="M778.3 163.5H790.5"/>
    <path d="M778.7 186.5L786.5 179.5 M782 191.5L789.8 184.5"/>
    <path d="M784.2 204.5V214.5 M778.5 215.3H790"/>
    <path d="M781.5 227.8L790.4 236.7 M777.7 232.2A8.8 8.8 0 0 1 786.3 240.3"/>
    <path d="M780 254.3H789 M780 260.6H789"/>
    <path d="M778.2 336.5H790.8 M778.2 333.6V339.4 M790.8 333.6V339.4"/>
    <path d="M784.7 354.3V366 M781.2 354.3H788.3 M781.2 366H788.3"/>
    <circle cx="784.3" cy="407" r="6.2"/>
    <path d="M784.3 407L788.3 402.8"/>
    <path d="M790.6 424.3L778.5 430L790.6 436.3 M787.3 426.3V434"/>
  </g>
  <g stroke="#e81e02" stroke-width="2.3" fill="none" stroke-linecap="square" stroke-linejoin="miter">
    <path d="M791 110.6 A11.5 11.5 0 0 0 779.6 122"/>
    <path d="M784.2 133.2V145.3"/>
    <path d="M778.3 163.5H790.5"/>
    <path d="M778.7 186.5L786.5 179.5 M782 191.5L789.8 184.5"/>
    <path d="M784.2 204.5V214.5 M778.5 215.3H790"/>
    <path d="M781.5 227.8L790.4 236.7 M777.7 232.2A8.8 8.8 0 0 1 786.3 240.3"/>
    <path d="M780 254.3H789 M780 260.6H789"/>
    <path d="M778.2 336.5H790.8 M778.2 333.6V339.4 M790.8 333.6V339.4"/>
    <path d="M784.7 354.3V366 M781.2 354.3H788.3 M781.2 366H788.3"/>
    <circle cx="784.3" cy="407" r="6.2"/>
    <path d="M784.3 407L788.3 402.8"/>
    <path d="M790.6 424.3L778.5 430L790.6 436.3 M787.3 426.3V434"/>
  </g>
  <!-- symmetric -->
  <path d="M777.6 276.3L783.6 281.9L777.6 287.5V284.2L780.2 281.9L777.6 279.6Z M791 276.3L785 281.9L791 287.5V284.2L788.4 281.9L791 279.6Z" fill="#ea1e02" stroke="#9a1000" stroke-width="0.5" stroke-linejoin="round"/>
  <!-- point -->
  <circle cx="784" cy="92" r="3" fill="#f02800" stroke="#8a0d00" stroke-width="0.6"/>
  <circle cx="781.6" cy="112.5" r="2.6" fill="#ff4a00" stroke="#c01800" stroke-width="0.5"/>
  <!-- separator -->
  <rect x="776" y="297" width="16" height="1" fill="#dedbd7"/>
  <!-- lock -->
  <path d="M781 312V309.5A3.5 3.5 0 0 1 788 309.5V312" stroke="#e01a00" stroke-width="2" fill="none"/>
  <rect x="778.6" y="311.2" width="11.8" height="8.2" rx="0.8" fill="#f01c00" stroke="#9a1000" stroke-width="0.5"/>
  <!-- diagonal double arrow -->
  <path d="M777.4 390.2L779.3 383.2L781.2 385.1L786.9 379.6L785 377.7L791.7 376.6L790.4 383.4L788.6 381.5L782.9 387L784.8 388.9Z" fill="#f01c00" stroke="#9a1000" stroke-width="0.5" stroke-linejoin="round"/>
</svg>


<!-- MDI tabs -->
<div class="abs" style="left:258px;top:437px;width:73px;height:19px;box-sizing:border-box;border:1px solid #cfccc7;border-top:none;border-radius:0 0 3px 3px;background:linear-gradient(#e6e4e1,#efeeec);"></div>
<div class="abs" style="left:330px;top:436px;width:102px;height:21px;box-sizing:border-box;border:1px solid #c4c0ba;border-top:none;border-radius:0 0 3px 3px;background:#f7f6f5;"></div>
<span class="t" style="left:262.5px;top:442px;font-size:10px;">Start page</span>
<span class="t" style="left:350px;top:442px;font-size:9.7px;">Unnamed : 1*</span>
<svg class="abs" style="left:314px;top:443px;" width="8" height="8" viewBox="0 0 8 8"><path d="M1.2 1.2 L6.8 6.8 M6.8 1.2 L1.2 6.8" stroke="#55534e" stroke-width="1.8" stroke-linecap="round"/></svg>
<svg class="abs" style="left:416.5px;top:443px;" width="8" height="8" viewBox="0 0 8 8"><path d="M1.2 1.2 L6.8 6.8 M6.8 1.2 L1.2 6.8" stroke="#55534e" stroke-width="1.8" stroke-linecap="round"/></svg>
<svg class="abs" style="left:334px;top:441px;" width="11" height="11" viewBox="0 0 11 11">
  <path d="M1 1 H6 V3 H3 V4.5 H5 V6.3 H3 V9.5 H1Z" fill="#e0281c"/>
  <circle cx="7" cy="6.8" r="2.9" fill="#1b2a6b"/>
  <circle cx="7" cy="6.8" r="1.1" fill="#f2f1f0"/>
  <path d="M7 3.2 V10.4 M3.4 6.8 H10.6 M4.5 4.3 L9.5 9.3 M9.5 4.3 L4.5 9.3" stroke="#1b2a6b" stroke-width="1"/>
  <circle cx="7" cy="6.8" r="1" fill="#f2f1f0"/>
</svg>

</body>
</html>
